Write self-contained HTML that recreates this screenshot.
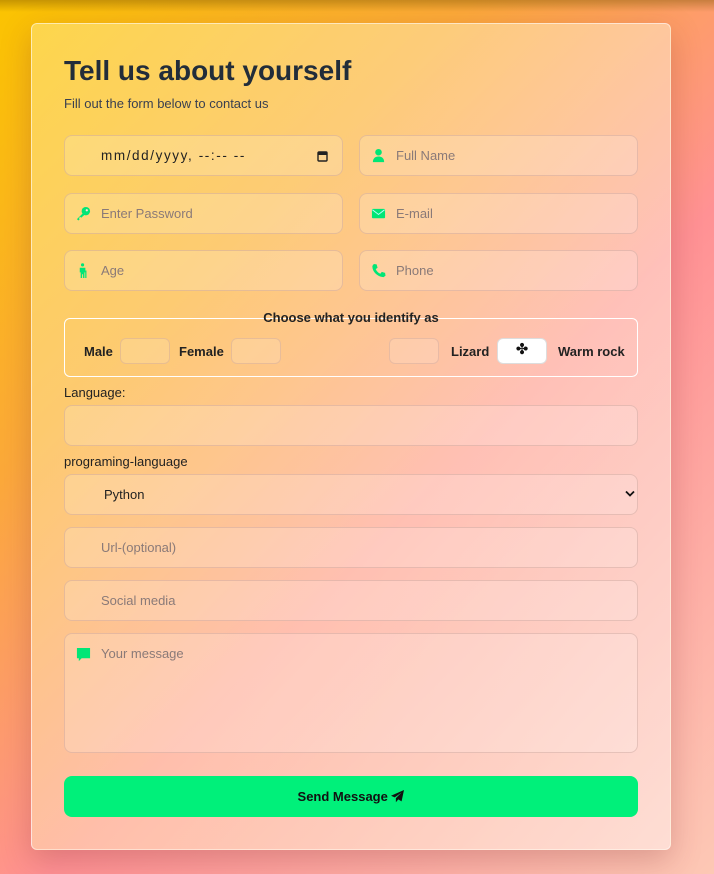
<!DOCTYPE html>
<html><head><style>
*{box-sizing:border-box;margin:0;padding:0}
html,body{width:714px;height:874px;overflow:hidden}
body{font-family:"Liberation Sans",Arial,sans-serif;background:linear-gradient(135deg,#fbc400 0%,#fca93a 30%,#ff9194 58%,#fdc8b5 100%);position:relative}
body:before{content:"";position:absolute;left:0;right:0;top:0;height:12px;background:linear-gradient(rgba(120,80,0,.4),rgba(120,80,0,0))}
.card{position:absolute;left:31px;top:23px;width:640px;height:827px;border-radius:6px;background:linear-gradient(110deg,rgba(255,240,160,.45),rgba(255,255,255,.45) 100%);box-shadow:0 10px 30px rgba(120,40,40,.25);border:1px solid rgba(255,255,255,.5)}
.inner{position:absolute;left:-1px;top:-1px;width:640px;height:827px}
h1{position:absolute;left:33px;top:32px;font-size:28px;font-weight:bold;color:#222d3a}
.sub{position:absolute;left:33px;top:73px;font-size:13px;color:#3a4050}
.in{position:absolute;height:41px;border:1px solid rgba(200,160,150,.45);border-radius:8px;background:rgba(255,255,255,.18);font-size:13px;color:#8a7a78;padding-left:36px;line-height:39px}
.ic{position:absolute;left:11px;top:12px;width:15px;height:15px}
.lbl{position:absolute;left:33px;font-size:13px;color:#222}
fieldset{position:absolute;left:33px;top:295px;width:574px;height:59px;border:1px solid #fff;border-radius:6px}
.leg{position:absolute;left:0;width:100%;top:287px;text-align:center;font-size:13px;font-weight:bold;color:#222}
.rl{position:absolute;top:321px;font-size:13px;font-weight:bold;color:#222}
.rb{position:absolute;top:315px;width:50px;height:26px;border:1px solid rgba(200,160,150,.4);border-radius:6px;background:rgba(255,255,255,.15)}
.btn{position:absolute;left:33px;top:753px;width:574px;height:41px;border-radius:8px;background:#00f07a;text-align:center;line-height:41px;font-size:13px;font-weight:bold;color:#111}
</style></head><body>
<div class="card"><div class="inner">
<h1>Tell us about yourself</h1>
<div class="sub">Fill out the form below to contact us</div>

<div class="in" style="left:33px;top:112px;width:279px;color:#222;font-size:13.5px;letter-spacing:1.6px">mm/dd/yyyy, --:-- --
<svg style="position:absolute;right:14px;top:14px" width="11" height="12" viewBox="0 0 11 12"><rect x="1" y="2" width="9" height="9" rx="1" fill="none" stroke="#222" stroke-width="1.4"/><rect x="1" y="2" width="9" height="3" fill="#222"/></svg></div>
<div class="in" style="left:328px;top:112px;width:279px">Full Name
<svg class="ic" viewBox="0 0 16 16"><circle cx="8" cy="4.5" r="3.5" fill="#00e676"/><path d="M2 15c0-4 2.5-6 6-6s6 2 6 6z" fill="#00e676"/></svg></div>

<div class="in" style="left:33px;top:170px;width:279px">Enter Password
<svg class="ic" viewBox="0 0 16 16"><circle cx="10.5" cy="5.5" r="4.5" fill="#00e676"/><path d="M8 7L1 14l1.5 1.5 1.5-1.5-1-1 1.5-1.5 1 1L9.5 9z" fill="#00e676"/><circle cx="11.5" cy="4.5" r="1.2" fill="#fdd"/></svg></div>
<div class="in" style="left:328px;top:170px;width:279px">E-mail
<svg class="ic" viewBox="0 0 16 16"><rect x="1" y="3" width="14" height="10" rx="1" fill="#00e676"/><path d="M1.5 4l6.5 5 6.5-5" fill="none" stroke="#bff" stroke-width="1"/></svg></div>

<div class="in" style="left:33px;top:227px;width:279px">Age
<svg class="ic" viewBox="0 0 16 16"><circle cx="7" cy="2" r="1.7" fill="#00e676"/><path d="M4 5h6v5H9v6H7.5v-4h-1v4H5v-6H4z" fill="#00e676"/><path d="M10.5 8v8" stroke="#00e676" stroke-width="1.3"/></svg></div>
<div class="in" style="left:328px;top:227px;width:279px">Phone
<svg class="ic" viewBox="0 0 16 16"><path d="M3 1l3 .5 1 3.5-2 1.5c1 2.3 2.7 4 5 5l1.5-2 3.5 1 .5 3-2 1.5C7 15 1 9 1.5 3z" fill="#00e676"/></svg></div>

<fieldset></fieldset>
<div class="leg">Choose what you identify as</div>
<div class="rl" style="left:53px">Male</div><div class="rb" style="left:89px"></div>
<div class="rl" style="left:148px">Female</div><div class="rb" style="left:200px"></div>
<div class="rb" style="left:358px"></div>
<div class="rl" style="left:420px">Lizard</div>
<div class="rb" style="left:466px;background:#fff;border-color:#ddd;text-align:center;line-height:22px;font-size:15px;color:#111">✤</div>
<div class="rl" style="left:527px">Warm rock</div>

<div class="lbl" style="top:362px">Language:</div>
<div class="in" style="left:33px;top:382px;width:574px"></div>
<div class="lbl" style="top:431px">programing-language</div>
<div class="in" style="left:33px;top:451px;width:574px;color:#222;padding-left:39px">Python
<svg style="position:absolute;right:2px;top:15px" width="10" height="8" viewBox="0 0 10 8"><path d="M1 1.5l4 4 4-4" fill="none" stroke="#111" stroke-width="1.8"/></svg></div>
<div class="in" style="left:33px;top:504px;width:574px">Url-(optional)</div>
<div class="in" style="left:33px;top:557px;width:574px">Social media</div>
<div class="in" style="left:33px;top:610px;width:574px;height:120px;line-height:normal;padding-top:12px">Your message
<svg class="ic" style="top:13px" viewBox="0 0 16 16"><path d="M1 1h14v11H6l-3 3v-3H1z" fill="#00e676"/></svg></div>

<div class="btn">Send Message <svg width="13" height="13" viewBox="0 0 16 16" style="vertical-align:-2px"><path d="M16 0L0 7l4.5 2L13 3 6 10v5l3-3.5 4 2.5z" fill="#111"/></svg></div>
</div></div>
</body></html>
